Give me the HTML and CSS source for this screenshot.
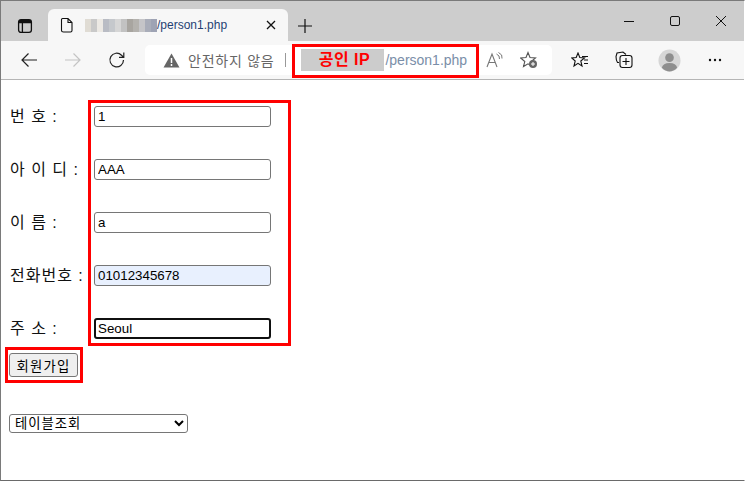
FILE: index.html
```html
<!DOCTYPE html>
<html lang="ko">
<head>
<meta charset="utf-8">
<title>person1.php</title>
<link rel="stylesheet" href="styles.css">
</head>
<body>
<div class="window">
  <header class="tabstrip">
    <svg class="ic-tabs" width="16" height="16" viewBox="0 0 16 16"><rect x="1.6" y="1.6" width="12.8" height="12.8" rx="2.4" fill="none" stroke="#111" stroke-width="1.3"/><path d="M1.6 4.6H14.400M5.400 4.600V14.400" fill="none" stroke="#111" stroke-width="1.300"/><rect x="2" y="2" width="12" height="2.600" fill="#111"/></svg>
    <div class="tab">
      <svg class="ic-file" width="14" height="16" viewBox="0 0 14 16"><path d="M2.500 1.500H8L12 5.500V13.500Q12 15 10.500 15H3.500Q1.500 15 1.500 13.500V2.500Q1.500 1.500 2.500 1.500ZM8 1.500V5.500H12" fill="none" stroke="#111" stroke-width="1.100"/></svg>
      <span class="blur"></span><span class="tab-title">/person1.php</span>
      <svg class="ic-close" width="10" height="10" viewBox="0 0 10 10"><path d="M1 1L9 9M9 1L1 9" stroke="#111" stroke-width="1.300"/></svg>
    </div>
    <svg class="ic-new" width="16" height="16" viewBox="0 0 16 16"><path d="M8 1V15M1 8H15" stroke="#111" stroke-width="1.200"/></svg>
    <div class="winctl">
      <svg width="12" height="12" viewBox="0 0 12 12"><path d="M1 6.500H11" stroke="#111" stroke-width="1"/></svg>
      <svg width="12" height="12" viewBox="0 0 12 12"><rect x="1.500" y="1.500" width="9" height="9" rx="1.500" fill="none" stroke="#111" stroke-width="1"/></svg>
      <svg width="12" height="12" viewBox="0 0 12 12"><path d="M1 1L11 11M11 1L1 11" stroke="#111" stroke-width="1"/></svg>
    </div>
  </header>
  <nav class="toolbar">
    <svg class="ic-back" width="18" height="16" viewBox="0 0 18 16"><path d="M17 8H2M8.500 1.500L2 8L8.500 14.500" fill="none" stroke="#222" stroke-width="1.200"/></svg>
    <svg class="ic-fwd" width="18" height="16" viewBox="0 0 18 16"><path d="M1 8H16M9.500 1.500L16 8L9.500 14.500" fill="none" stroke="#c4c4c4" stroke-width="1.200"/></svg>
    <svg class="ic-reload" width="18" height="18" viewBox="0 0 18 18"><path d="M15.500 9A6.800 6.800 0 1 1 13.500 4.200L15.500 6.200M15.800 1.500V6.300H11" fill="none" stroke="#222" stroke-width="1.200"/></svg>
    <div class="omnibox">
      <svg class="ic-warn" width="17" height="15" viewBox="0 0 17 15"><path d="M8.500 0.500L16.500 14.500H0.500Z" fill="#666"/><path d="M8.500 5V10M8.500 11V13" stroke="#fff" stroke-width="1.500"/></svg>
      <span class="insecure">안전하지 않음</span>
      <span class="sep"></span>
      <span class="ip">공인 IP</span><span class="path">/person1.php</span>
      <svg class="ic-read" width="18" height="16" viewBox="0 0 18 16"><path d="M1 15L6 2L11 15M2.800 10.500H9.200" fill="none" stroke="#777" stroke-width="1.100"/><path d="M10.500 2Q14 3.500 13.500 7M12.500 0.500Q17 2.500 16 6.500" fill="none" stroke="#777" stroke-width="1"/></svg>
      <svg class="ic-fav" width="18" height="18" viewBox="0 0 18 18"><path d="M8 1.500L10 6.500L15.500 7L11.200 10.500L12.500 15.500L8 12.800L3.500 15.500L4.800 10.500L0.700 7L6 6.500Z" fill="none" stroke="#555" stroke-width="1.100"/><circle cx="13" cy="13" r="4" fill="#666"/><path d="M13 11V15M11 13H15" stroke="#fff" stroke-width="1"/></svg>
    </div>
    <svg class="ic-favs" width="18" height="16" viewBox="0 0 18 16"><path d="M7 1L8.800 5.500L13.500 6L9.800 9L11 14L7 11.300L3 14L4.200 9L0.800 6L5.200 5.500Z" fill="none" stroke="#111" stroke-width="1.100"/><path d="M11 4.500H17M13 8H17M13 11.500H17" stroke="#111" stroke-width="1"/></svg>
    <svg class="ic-coll" width="18" height="18" viewBox="0 0 18 18"><path d="M4 11.500H2.500Q1 9 1 5.500L2 2L8 1L11 3.500" fill="none" stroke="#111" stroke-width="1.100"/><rect x="5" y="4.500" width="12" height="12" rx="2.500" fill="none" stroke="#111" stroke-width="1.100"/><path d="M11 7V14M7.500 10.500H14.500" stroke="#111" stroke-width="1.100"/></svg>
    <svg class="ic-avatar" width="23" height="23" viewBox="0 0 24 24"><circle cx="12" cy="12" r="11.500" fill="#d6d6d6"/><circle cx="12" cy="9" r="4.500" fill="#8e8e8e"/><path d="M4 19.500Q5 14.500 12 14.500T20 19.500Q16 23.500 12 23.500T4 19.500Z" fill="#8e8e8e"/></svg>
    <svg class="ic-more" width="14" height="4" viewBox="0 0 14 4"><circle cx="2" cy="2" r="1.200" fill="#111"/><circle cx="7" cy="2" r="1.200" fill="#111"/><circle cx="12" cy="2" r="1.200" fill="#111"/></svg>
  </nav>
  <main class="page">
    <form class="form">
      <div class="row"><label class="lab">번 호 :</label><input class="field" type="text" value="1"></div>
      <div class="row"><label class="lab">아 이 디 :</label><input class="field" type="text" value="AAA"></div>
      <div class="row"><label class="lab">이 름 :</label><input class="field" type="text" value="a"></div>
      <div class="row"><label class="lab">전화번호 :</label><input class="field autofill" type="text" value="01012345678"></div>
      <div class="row"><label class="lab">주 소 :</label><input class="field focused" type="text" value="Seoul"></div>
      <button class="submit" type="button">회원가입</button>
      <select class="sel"><option>테이블조회</option></select>
    </form>
  </main>
  <div class="mark mark-ip"></div>
  <div class="mark mark-fields"></div>
  <div class="mark mark-btn"></div>
</div>
</body>
</html>
```

FILE: styles.css
```css
* { box-sizing: border-box; }
html, body { margin: 0; padding: 0; height: 100%; overflow: hidden; background: #fff; }
body { font-family: "Liberation Sans", "Noto Sans CJK KR", sans-serif; }
svg { display: block; flex: none; }

.window {
  position: relative;
  width: 745px;
  height: 481px;
  border: 1px solid #7a7a7a;
  border-bottom-color: #6a6a6a;
  border-right-color: #fff;
  display: flex;
  flex-direction: column;
}

.tabstrip {
  height: 40px;
  flex: none;
  background: #cdcdcd;
  display: flex;
  align-items: flex-start;
  padding-top: 8px;
}
.ic-tabs { margin: 9px 0 0 16px; }
.tab {
  width: 240px;
  height: 32px;
  margin-left: 15px;
  background: #f7f7f7;
  border-radius: 6px 6px 0 0;
  display: flex;
  align-items: center;
  padding-left: 12px;
}
.ic-file { margin-right: 11px; }
.blur {
  width: 72px;
  height: 13px;
  background:
    linear-gradient(90deg, #e0dcd4 0 6px, #c9c9c9 6px 12px, #ece9e4 12px 18px, #b9bcc4 18px 24px, #c5c8cc 24px 30px, #d6d6d6 30px 36px, #c2c2c2 36px 42px, #a8a5a0 42px 48px, #b4b2ae 48px 54px, #c5c5c8 54px 60px, #a9adb9 60px 66px, #9ea3b4 66px 72px);
}
.tab-title { font-size: 12px; color: #1f3f73; margin-right: auto; }
.ic-close { margin-right: 12px; }
.ic-new { margin: 9px 0 0 9px; }
.winctl {
  margin-left: auto;
  margin-top: 6px;
  display: flex;
  gap: 34px;
  padding-right: 17px;
}

.toolbar {
  height: 39px;
  flex: none;
  background: #f7f7f7;
  border-bottom: 1px solid #b5b5b5;
  display: flex;
  align-items: center;
}
.ic-back { margin-left: 19px; }
.ic-fwd { margin-left: 26px; }
.ic-reload { margin-left: 26px; }
.omnibox {
  width: 407px;
  height: 30px;
  margin-left: 19px;
  background: #fff;
  border-radius: 5px;
  display: flex;
  align-items: center;
  padding-left: 18px;
}
.insecure { margin-left: 8px; font-size: 14px; letter-spacing: 0.75px; color: #666; white-space: nowrap; }
.sep { width: 1px; height: 14px; background: #999; margin: 0 15px 0 11px; }
.ip {
  width: 83px;
  height: 22px;
  padding-left: 3px;
  background: #cccccc;
  color: #f00;
  font-weight: 700;
  font-size: 16px;
  letter-spacing: 0.5px;
  line-height: 22px;
  text-align: center;
  white-space: nowrap;
}
.path { font-size: 14px; color: #7a8ea8; margin-left: 1px; }
.ic-read { margin-left: 19px; }
.ic-fav { margin-left: 16px; }
.ic-favs { margin-left: 19px; }
.ic-coll { margin-left: 26px; }
.ic-avatar { margin-left: 25px; }
.ic-more { margin-left: 27px; }

.page { flex: 1; padding: 26px 0 0 8px; }
.form { display: flex; flex-direction: column; align-items: flex-start; }
.row { display: flex; align-items: center; height: 21px; margin-bottom: 32px; }
.lab { width: 85px; padding: 0 0 4px 1px; font-size: 16px; letter-spacing: 1px; font-family: "Liberation Sans", "Noto Sans CJK KR", sans-serif; color: #111; white-space: pre; }
.field {
  width: 177px;
  height: 21px;
  padding: 1px 3px;
  border: 1px solid #767676;
  border-radius: 3px;
  background: #fff;
  color: #000;
  font: 13.333px "Liberation Sans", sans-serif;
  outline: none;
}
.autofill { background: #e8f0fe; }
.focused { border: 2px solid #101010; padding: 0 2px; }
.submit {
  width: 69px;
  height: 24px;
  margin-top: -18px;
  padding: 0;
  background: #efefef;
  border: 1px solid #767676;
  border-radius: 3px;
  color: #000;
  letter-spacing: 1.2px;
  font: 13.333px "Liberation Sans", "Noto Sans CJK KR", sans-serif;
}
.sel {
  width: 179px;
  height: 19px;
  margin-top: 37px;
  background: #fff;
  border: 1px solid #767676;
  border-radius: 3px;
  color: #000;
  letter-spacing: 1px;
  font: 13.333px "Liberation Sans", "Noto Sans CJK KR", sans-serif;
  padding: 0 0 0 1px;
}

.mark { position: absolute; border: 3px solid #f00; }
.mark-ip { left: 291px; top: 43px; width: 187px; height: 34px; }
.mark-fields { left: 87px; top: 99px; width: 203px; height: 246px; }
.mark-btn { left: 4px; top: 346px; width: 78px; height: 36px; }
```
